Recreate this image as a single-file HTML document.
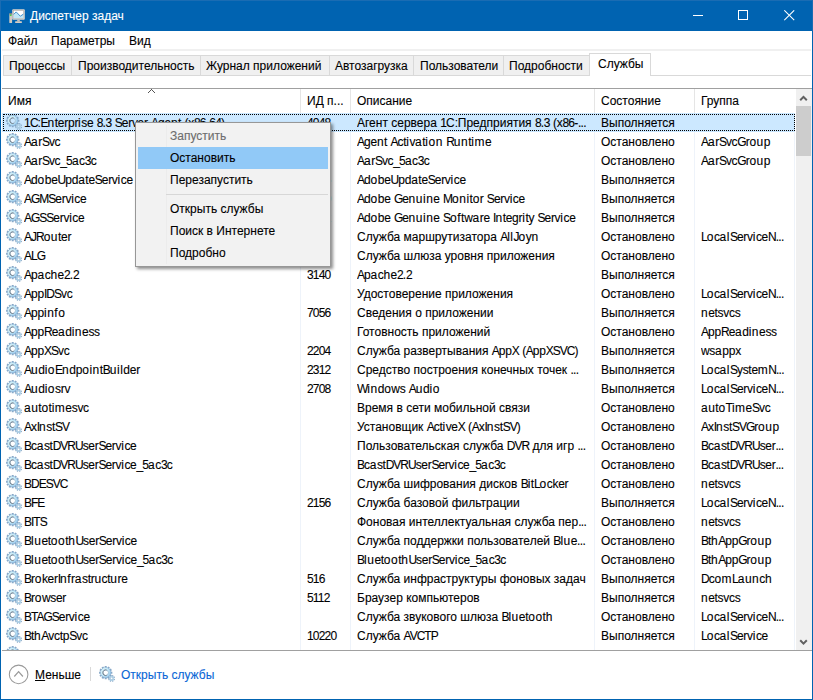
<!DOCTYPE html>
<html><head><meta charset="utf-8">
<style>
*{margin:0;padding:0;box-sizing:border-box}
html,body{width:813px;height:700px;overflow:hidden;background:#fff}
body{font-family:"Liberation Sans",sans-serif;font-size:12px;color:#000;position:relative;-webkit-text-stroke:0.1px currentColor}
.abs{position:absolute}
#frame{position:absolute;left:0;top:0;width:813px;height:700px;border:1px solid #0063b1;border-top:none}
#title{position:absolute;left:0;top:0;width:813px;height:31px;background:#0063b1}
#title .t{position:absolute;left:30px;top:7px;line-height:19px;color:#fff;font-size:12px;white-space:nowrap}
.menu{position:absolute;top:32px;height:18px;line-height:18px;font-size:12px;white-space:nowrap}
#gl1{position:absolute;left:2px;top:49px;width:809px;height:2px;background:#f0f0f0}
.tab{position:absolute;top:55px;height:21px;background:#f0f0f0;border:1px solid #d9d9d9;line-height:19px;white-space:nowrap;font-size:12px}
.tab span{position:absolute;top:1px;margin-left:-1px}
.tab.selt{top:53px;height:23px;background:#fff;border-bottom:none}
#tabline{position:absolute;left:650px;top:75px;width:161px;height:1px;background:#d9d9d9}
#hdrline{position:absolute;left:2px;top:88px;width:810px;height:1px;background:#a0a0a0}
.hsep{position:absolute;top:89px;width:1px;height:24px;background:#e5e5e5}
.h{position:absolute;top:89px;line-height:24px;white-space:nowrap}
.csep{position:absolute;top:113px;width:1px;height:537px;background:#eef3fa}
.row{position:absolute;left:2px;width:793px;height:19px;line-height:19px;white-space:nowrap}
.row.sel{background:#cce8ff}
.row.sel::after{content:"";position:absolute;left:1px;top:1px;right:0;bottom:1px;border:1px dotted #000}
.row .ic{position:absolute;left:2px;top:0}
.c{position:absolute;top:1px;overflow:hidden}
.n{left:22px;width:276px}
.p{left:305px;width:44px}
.d{left:355px;width:238px}
.s{left:599px;width:96px}
.g{left:699px;width:94px}
#list{position:absolute;left:2px;top:113px;width:793px;height:537px;overflow:hidden}
#list .row{left:0}
#sb{position:absolute;left:796px;top:89px;width:16px;height:561px;background:#f0f0f0}
#thumb{position:absolute;left:0px;top:17px;width:15px;height:50px;background:#cdcdcd}
#footline{position:absolute;left:2px;top:650px;width:810px;height:1px;background:#a0a0a0}
#ctx{position:absolute;left:135px;top:122px;width:196px;height:145px;background:#f2f2f2;border:1px solid #979797;box-shadow:2px 2px 3px rgba(0,0,0,0.45)}
#ctx .gut{position:absolute;left:30px;top:2px;width:1px;bottom:2px;background:#ececec}
#ctx .it{position:absolute;left:2px;width:190px;height:22px;line-height:22px;white-space:nowrap}
#ctx .it span{position:absolute;left:32px;top:0}
#ctx .hl{background:#91c9f7}
#ctx .dis{color:#6d6d6d}
#ctx .sep{position:absolute;left:30px;top:71px;width:162px;height:1px;background:#d7d7d7}
.link{color:#0a67d6}
i{font-style:normal}
i.u{letter-spacing:-1px}
i.us{letter-spacing:-1px}
i.w{letter-spacing:-0.3px}
i.b{letter-spacing:-0.2px}
i.o{letter-spacing:0.5px}
i.t{letter-spacing:0.5px}
i.pu{letter-spacing:-0.3px}
i.dg{letter-spacing:-0.8px}
i.dt{letter-spacing:-0.7px}
i.dt1{letter-spacing:-0.3px}
</style></head><body>
<svg width="0" height="0" style="position:absolute">
<defs>
<radialGradient id="gbody" gradientUnits="userSpaceOnUse" cx="7.7" cy="6.8" r="6.5">
<stop offset="0" stop-color="#f0fbff"/><stop offset="0.55" stop-color="#c9ecf8"/><stop offset="1" stop-color="#8cc0ea"/>
</radialGradient>
<symbol id="gear" viewBox="0 0 20 18">
<path d="M13.57 6.56 L15.33 6.75 L15.33 8.65 L13.57 8.84 L13.53 8.99 L13.49 9.15 L14.92 10.20 L13.97 11.84 L12.35 11.12 L12.24 11.24 L12.12 11.35 L12.84 12.97 L11.20 13.92 L10.15 12.49 L9.99 12.53 L9.84 12.57 L9.65 14.33 L7.75 14.33 L7.56 12.57 L7.41 12.53 L7.25 12.49 L6.20 13.92 L4.56 12.97 L5.28 11.35 L5.16 11.24 L5.05 11.12 L3.43 11.84 L2.48 10.20 L3.91 9.15 L3.87 8.99 L3.83 8.84 L2.07 8.65 L2.07 6.75 L3.83 6.56 L3.87 6.41 L3.91 6.25 L2.48 5.20 L3.43 3.56 L5.05 4.28 L5.16 4.16 L5.28 4.05 L4.56 2.43 L6.20 1.48 L7.25 2.91 L7.41 2.87 L7.56 2.83 L7.75 1.07 L9.65 1.07 L9.84 2.83 L9.99 2.87 L10.15 2.91 L11.20 1.48 L12.84 2.43 L12.12 4.05 L12.24 4.16 L12.35 4.28 L13.97 3.56 L14.92 5.20 L13.49 6.25 L13.53 6.41Z M6.25 7.70 a2.45 2.45 0 1 0 4.90 0 a2.45 2.45 0 1 0 -4.90 0Z" fill="#87a8c8" fill-rule="evenodd"/>
<circle cx="8.7" cy="7.7" r="3.85" fill="none" stroke="url(#gbody)" stroke-width="2.5"/>
<circle cx="8.7" cy="7.7" r="2.85" fill="none" stroke="#a9c6dc" stroke-width="0.8"/>
<path d="M9.67 10.38 A2.85 2.85 0 1 1 9.67 5.02" fill="none" stroke="#6b747e" stroke-width="0.85"/>
<path d="M17.08 13.68 L18.00 14.22 L17.58 15.23 L16.56 14.96 L16.37 15.17 L16.16 15.36 L16.43 16.38 L15.42 16.80 L14.88 15.88 L14.60 15.90 L14.32 15.88 L13.78 16.80 L12.77 16.38 L13.04 15.36 L12.83 15.17 L12.64 14.96 L11.62 15.23 L11.20 14.22 L12.12 13.68 L12.10 13.40 L12.12 13.12 L11.20 12.58 L11.62 11.57 L12.64 11.84 L12.83 11.63 L13.04 11.44 L12.77 10.42 L13.78 10.00 L14.32 10.92 L14.60 10.90 L14.88 10.92 L15.42 10.00 L16.43 10.42 L16.16 11.44 L16.37 11.63 L16.56 11.84 L17.58 11.57 L18.00 12.58 L17.08 13.12 L17.10 13.40Z M13.45 13.40 a1.15 1.15 0 1 0 2.30 0 a1.15 1.15 0 1 0 -2.30 0Z" fill="#84a4c4" fill-rule="evenodd"/>
<circle cx="14.6" cy="13.4" r="1.85" fill="none" stroke="#b4d6ea" stroke-width="1.3"/>
</symbol>
</defs>
</svg>
<div id="title">
 <svg class="abs" style="left:9px;top:9px" width="16" height="14" viewBox="0 0 16 14">
  <rect x="0.3" y="4.2" width="2.8" height="9.8" rx="0.6" fill="#d2cac2"/>
  <rect x="0.6" y="4.4" width="2.2" height="1.1" fill="#5a5a5a"/>
  <rect x="0.8" y="5.6" width="1.8" height="1.3" fill="#39d23c"/>
  <rect x="3.2" y="0.2" width="12.6" height="10.6" rx="1" fill="#dad3cc"/>
  <rect x="4.5" y="1.5" width="10" height="7.8" fill="#fff" stroke="#a9a39d" stroke-width="0.5"/>
  <path d="M4.7 5.4 L7.2 2.9 L11.3 7.2 L14.3 5.2 L14.3 9.2 L4.7 9.2Z" fill="#bfe6f7"/>
  <path d="M4.7 5.4 L7.2 2.9 L11.3 7.2 L14.3 5.2" fill="none" stroke="#2f86c8" stroke-width="0.9"/>
  <rect x="8.2" y="10.7" width="2.6" height="1.7" fill="#cbc2b9"/>
  <rect x="6" y="12.3" width="7" height="1.7" rx="0.8" fill="#d6cdc4"/>
 </svg>
 <div class="t">Диспетчер задач</div>
 <svg class="abs" style="left:693px;top:10px" width="10" height="11"><rect x="0" y="5" width="10" height="1" fill="#fff"/></svg>
 <svg class="abs" style="left:738px;top:10px" width="11" height="11"><rect x="0.5" y="0.5" width="9" height="9" fill="none" stroke="#fff" stroke-width="1"/></svg>
 <svg class="abs" style="left:784px;top:10px" width="11" height="11"><path d="M0.3 0.3 L10.2 10.2 M10.2 0.3 L0.3 10.2" stroke="#fff" stroke-width="1.05"/></svg>
</div>
<div class="menu" style="left:8px">Файл</div>
<div class="menu" style="left:51px">Параметры</div>
<div class="menu" style="left:129px">Вид</div>
<div id="gl1"></div>
<div class="tab" style="left:3px;width:69px"><span style="left:6px">Процессы</span></div>
<div class="tab" style="left:71px;width:130px"><span style="left:7px">Производительность</span></div>
<div class="tab" style="left:200px;width:130px"><span style="left:6px">Журнал приложений</span></div>
<div class="tab" style="left:329px;width:85px"><span style="left:6px">Автозагрузка</span></div>
<div class="tab" style="left:413px;width:91px"><span style="left:7px">Пользователи</span></div>
<div class="tab" style="left:503px;width:87px"><span style="left:6px">Подробности</span></div>
<div class="tab selt" style="left:589px;width:62px"><span style="left:9px;top:1px">Службы</span></div>
<div id="tabline"></div>
<div id="hdrline"></div>
<svg class="abs" style="left:148px;top:89px" width="7" height="4" fill="#555" shape-rendering="crispEdges"><rect x="0" y="3" width="1" height="1"/><rect x="1" y="2" width="1" height="1"/><rect x="2" y="1" width="1" height="1"/><rect x="3" y="0" width="1" height="1"/><rect x="4" y="1" width="1" height="1"/><rect x="5" y="2" width="1" height="1"/><rect x="6" y="3" width="1" height="1"/></svg>
<div class="h" style="left:8px">Имя</div>
<div class="hsep" style="left:300px"></div>
<div class="h" style="left:307px">ИД п...</div>
<div class="hsep" style="left:350px"></div>
<div class="h" style="left:357px">Описание</div>
<div class="hsep" style="left:594px"></div>
<div class="h" style="left:601px">Состояние</div>
<div class="hsep" style="left:694px"></div>
<div class="h" style="left:701px">Группа</div>
<div class="csep" style="left:300px"></div>
<div class="csep" style="left:350px"></div>
<div class="csep" style="left:594px"></div>
<div class="csep" style="left:694px"></div>
<div class="csep" style="left:794px"></div>
<div id="list">
<div class="row sel" style="top:0px"><svg class="ic" width="20" height="18" viewBox="0 0 20 18"><use href="#gear"/></svg><span class="c n"><i class="dg">1</i><i class="u">C</i><i class="pu">:</i><i class="u">E</i><i class="o">n</i><i class="w">ter</i><i class="b">p</i><i class="w">r</i><i class="t">i</i><i class="w">se</i> <i class="dg">8</i><i class="dt1">.</i><i class="dg">3</i> <i class="u">S</i><i class="w">erver</i> <i class="u">A</i><i class="b">g</i><i class="w">e</i><i class="o">n</i><i class="w">t</i> <i class="pu">(</i><i class="w">x</i><i class="dg">86</i><i class="pu">-</i><i class="dg">64</i><i class="pu">)</i></span><span class="c p"><i class="dg">4048</i></span><span class="c d">Агент сервера <i class="dg">1</i>С<i class="pu">:</i>Предприятия <i class="dg">8</i><i class="dt1">.</i><i class="dg">3</i> <i class="pu">(</i><i class="w">x</i><i class="dg">86</i><i class="pu">-</i><i class="dt">...</i></span><span class="c s">Выполняется</span><span class="c g"></span></div>
<div class="row" style="top:19px"><svg class="ic" width="20" height="18" viewBox="0 0 20 18"><use href="#gear"/></svg><span class="c n"><i class="u">A</i><i class="o">a</i><i class="w">r</i><i class="u">S</i><i class="w">vc</i></span><span class="c p"></span><span class="c d"><i class="u">A</i><i class="b">g</i><i class="w">e</i><i class="o">n</i><i class="w">t</i> <i class="u">A</i><i class="w">ct</i><i class="t">i</i><i class="w">v</i><i class="o">a</i><i class="w">t</i><i class="t">i</i><i class="o">on</i> <i class="u">R</i><i class="o">un</i><i class="w">t</i><i class="t">i</i><i class="o">m</i><i class="w">e</i></span><span class="c s">Остановлено</span><span class="c g"><i class="u">A</i><i class="o">a</i><i class="w">r</i><i class="u">S</i><i class="w">vc</i><i class="u">G</i><i class="w">r</i><i class="o">ou</i><i class="b">p</i></span></div>
<div class="row" style="top:38px"><svg class="ic" width="20" height="18" viewBox="0 0 20 18"><use href="#gear"/></svg><span class="c n"><i class="u">A</i><i class="o">a</i><i class="w">r</i><i class="u">S</i><i class="w">vc</i><i class="us">_</i><i class="dg">5</i><i class="o">a</i><i class="w">c</i><i class="dg">3</i><i class="w">c</i></span><span class="c p"></span><span class="c d"><i class="u">A</i><i class="o">a</i><i class="w">r</i><i class="u">S</i><i class="w">vc</i><i class="us">_</i><i class="dg">5</i><i class="o">a</i><i class="w">c</i><i class="dg">3</i><i class="w">c</i></span><span class="c s">Остановлено</span><span class="c g"><i class="u">A</i><i class="o">a</i><i class="w">r</i><i class="u">S</i><i class="w">vc</i><i class="u">G</i><i class="w">r</i><i class="o">ou</i><i class="b">p</i></span></div>
<div class="row" style="top:57px"><svg class="ic" width="20" height="18" viewBox="0 0 20 18"><use href="#gear"/></svg><span class="c n"><i class="u">A</i><i class="b">d</i><i class="o">o</i><i class="b">b</i><i class="w">e</i><i class="u">U</i><i class="b">pd</i><i class="o">a</i><i class="w">te</i><i class="u">S</i><i class="w">erv</i><i class="t">i</i><i class="w">ce</i></span><span class="c p"><i class="dg">4536</i></span><span class="c d"><i class="u">A</i><i class="b">d</i><i class="o">o</i><i class="b">b</i><i class="w">e</i><i class="u">U</i><i class="b">pd</i><i class="o">a</i><i class="w">te</i><i class="u">S</i><i class="w">erv</i><i class="t">i</i><i class="w">ce</i></span><span class="c s">Выполняется</span><span class="c g"></span></div>
<div class="row" style="top:76px"><svg class="ic" width="20" height="18" viewBox="0 0 20 18"><use href="#gear"/></svg><span class="c n"><i class="u">AGMS</i><i class="w">erv</i><i class="t">i</i><i class="w">ce</i></span><span class="c p"><i class="dg">4560</i></span><span class="c d"><i class="u">A</i><i class="b">d</i><i class="o">o</i><i class="b">b</i><i class="w">e</i> <i class="u">G</i><i class="w">e</i><i class="o">nu</i><i class="t">i</i><i class="o">n</i><i class="w">e</i> <i class="u">M</i><i class="o">on</i><i class="t">i</i><i class="w">t</i><i class="o">o</i><i class="w">r</i> <i class="u">S</i><i class="w">erv</i><i class="t">i</i><i class="w">ce</i></span><span class="c s">Выполняется</span><span class="c g"></span></div>
<div class="row" style="top:95px"><svg class="ic" width="20" height="18" viewBox="0 0 20 18"><use href="#gear"/></svg><span class="c n"><i class="u">AGSS</i><i class="w">erv</i><i class="t">i</i><i class="w">ce</i></span><span class="c p"><i class="dg">4572</i></span><span class="c d"><i class="u">A</i><i class="b">d</i><i class="o">o</i><i class="b">b</i><i class="w">e</i> <i class="u">G</i><i class="w">e</i><i class="o">nu</i><i class="t">i</i><i class="o">n</i><i class="w">e</i> <i class="u">S</i><i class="o">o</i><i class="t">f</i><i class="w">tw</i><i class="o">a</i><i class="w">re</i> <i class="u">I</i><i class="o">n</i><i class="w">te</i><i class="b">g</i><i class="w">r</i><i class="t">i</i><i class="w">ty</i> <i class="u">S</i><i class="w">erv</i><i class="t">i</i><i class="w">ce</i></span><span class="c s">Выполняется</span><span class="c g"></span></div>
<div class="row" style="top:114px"><svg class="ic" width="20" height="18" viewBox="0 0 20 18"><use href="#gear"/></svg><span class="c n"><i class="u">AJR</i><i class="o">ou</i><i class="w">ter</i></span><span class="c p"></span><span class="c d">Служба маршрутизатора <i class="u">A</i><i class="t">ll</i><i class="u">J</i><i class="o">o</i><i class="w">y</i><i class="o">n</i></span><span class="c s">Остановлено</span><span class="c g"><i class="u">L</i><i class="o">o</i><i class="w">c</i><i class="o">a</i><i class="t">l</i><i class="u">S</i><i class="w">erv</i><i class="t">i</i><i class="w">ce</i><i class="u">N</i><i class="dt">...</i></span></div>
<div class="row" style="top:133px"><svg class="ic" width="20" height="18" viewBox="0 0 20 18"><use href="#gear"/></svg><span class="c n"><i class="u">ALG</i></span><span class="c p"></span><span class="c d">Служба шлюза уровня приложения</span><span class="c s">Остановлено</span><span class="c g"></span></div>
<div class="row" style="top:152px"><svg class="ic" width="20" height="18" viewBox="0 0 20 18"><use href="#gear"/></svg><span class="c n"><i class="u">A</i><i class="b">p</i><i class="o">a</i><i class="w">c</i><i class="o">h</i><i class="w">e</i><i class="dg">2</i><i class="dt1">.</i><i class="dg">2</i></span><span class="c p"><i class="dg">3140</i></span><span class="c d"><i class="u">A</i><i class="b">p</i><i class="o">a</i><i class="w">c</i><i class="o">h</i><i class="w">e</i><i class="dg">2</i><i class="dt1">.</i><i class="dg">2</i></span><span class="c s">Выполняется</span><span class="c g"></span></div>
<div class="row" style="top:171px"><svg class="ic" width="20" height="18" viewBox="0 0 20 18"><use href="#gear"/></svg><span class="c n"><i class="u">A</i><i class="b">pp</i><i class="u">IDS</i><i class="w">vc</i></span><span class="c p"></span><span class="c d">Удостоверение приложения</span><span class="c s">Остановлено</span><span class="c g"><i class="u">L</i><i class="o">o</i><i class="w">c</i><i class="o">a</i><i class="t">l</i><i class="u">S</i><i class="w">erv</i><i class="t">i</i><i class="w">ce</i><i class="u">N</i><i class="dt">...</i></span></div>
<div class="row" style="top:190px"><svg class="ic" width="20" height="18" viewBox="0 0 20 18"><use href="#gear"/></svg><span class="c n"><i class="u">A</i><i class="b">pp</i><i class="t">i</i><i class="o">n</i><i class="t">f</i><i class="o">o</i></span><span class="c p"><i class="dg">7056</i></span><span class="c d">Сведения о приложении</span><span class="c s">Выполняется</span><span class="c g"><i class="o">n</i><i class="w">etsvcs</i></span></div>
<div class="row" style="top:209px"><svg class="ic" width="20" height="18" viewBox="0 0 20 18"><use href="#gear"/></svg><span class="c n"><i class="u">A</i><i class="b">pp</i><i class="u">R</i><i class="w">e</i><i class="o">a</i><i class="b">d</i><i class="t">i</i><i class="o">n</i><i class="w">ess</i></span><span class="c p"></span><span class="c d">Готовность приложений</span><span class="c s">Остановлено</span><span class="c g"><i class="u">A</i><i class="b">pp</i><i class="u">R</i><i class="w">e</i><i class="o">a</i><i class="b">d</i><i class="t">i</i><i class="o">n</i><i class="w">ess</i></span></div>
<div class="row" style="top:228px"><svg class="ic" width="20" height="18" viewBox="0 0 20 18"><use href="#gear"/></svg><span class="c n"><i class="u">A</i><i class="b">pp</i><i class="u">XS</i><i class="w">vc</i></span><span class="c p"><i class="dg">2204</i></span><span class="c d">Служба развертывания <i class="u">A</i><i class="b">pp</i><i class="u">X</i> <i class="pu">(</i><i class="u">A</i><i class="b">pp</i><i class="u">XSVC</i><i class="pu">)</i></span><span class="c s">Выполняется</span><span class="c g"><i class="w">ws</i><i class="o">a</i><i class="b">pp</i><i class="w">x</i></span></div>
<div class="row" style="top:247px"><svg class="ic" width="20" height="18" viewBox="0 0 20 18"><use href="#gear"/></svg><span class="c n"><i class="u">A</i><i class="o">u</i><i class="b">d</i><i class="t">i</i><i class="o">o</i><i class="u">E</i><i class="o">n</i><i class="b">dp</i><i class="o">o</i><i class="t">i</i><i class="o">n</i><i class="w">t</i><i class="u">B</i><i class="o">u</i><i class="t">il</i><i class="b">d</i><i class="w">er</i></span><span class="c p"><i class="dg">2312</i></span><span class="c d">Средство построения конечных точек <i class="dt">...</i></span><span class="c s">Выполняется</span><span class="c g"><i class="u">L</i><i class="o">o</i><i class="w">c</i><i class="o">a</i><i class="t">l</i><i class="u">S</i><i class="w">yste</i><i class="o">m</i><i class="u">N</i><i class="dt">...</i></span></div>
<div class="row" style="top:266px"><svg class="ic" width="20" height="18" viewBox="0 0 20 18"><use href="#gear"/></svg><span class="c n"><i class="u">A</i><i class="o">u</i><i class="b">d</i><i class="t">i</i><i class="o">o</i><i class="w">srv</i></span><span class="c p"><i class="dg">2708</i></span><span class="c d"><i class="u">W</i><i class="t">i</i><i class="o">n</i><i class="b">d</i><i class="o">o</i><i class="w">ws</i> <i class="u">A</i><i class="o">u</i><i class="b">d</i><i class="t">i</i><i class="o">o</i></span><span class="c s">Выполняется</span><span class="c g"><i class="u">L</i><i class="o">o</i><i class="w">c</i><i class="o">a</i><i class="t">l</i><i class="u">S</i><i class="w">erv</i><i class="t">i</i><i class="w">ce</i><i class="u">N</i><i class="dt">...</i></span></div>
<div class="row" style="top:285px"><svg class="ic" width="20" height="18" viewBox="0 0 20 18"><use href="#gear"/></svg><span class="c n"><i class="o">au</i><i class="w">t</i><i class="o">o</i><i class="w">t</i><i class="t">i</i><i class="o">m</i><i class="w">esvc</i></span><span class="c p"></span><span class="c d">Время в сети мобильной связи</span><span class="c s">Остановлено</span><span class="c g"><i class="o">au</i><i class="w">t</i><i class="o">o</i><i class="u">T</i><i class="t">i</i><i class="o">m</i><i class="w">e</i><i class="u">S</i><i class="w">vc</i></span></div>
<div class="row" style="top:304px"><svg class="ic" width="20" height="18" viewBox="0 0 20 18"><use href="#gear"/></svg><span class="c n"><i class="u">A</i><i class="w">x</i><i class="u">I</i><i class="o">n</i><i class="w">st</i><i class="u">SV</i></span><span class="c p"></span><span class="c d">Установщик <i class="u">A</i><i class="w">ct</i><i class="t">i</i><i class="w">ve</i><i class="u">X</i> <i class="pu">(</i><i class="u">A</i><i class="w">x</i><i class="u">I</i><i class="o">n</i><i class="w">st</i><i class="u">SV</i><i class="pu">)</i></span><span class="c s">Остановлено</span><span class="c g"><i class="u">A</i><i class="w">x</i><i class="u">I</i><i class="o">n</i><i class="w">st</i><i class="u">SVG</i><i class="w">r</i><i class="o">ou</i><i class="b">p</i></span></div>
<div class="row" style="top:323px"><svg class="ic" width="20" height="18" viewBox="0 0 20 18"><use href="#gear"/></svg><span class="c n"><i class="u">B</i><i class="w">c</i><i class="o">a</i><i class="w">st</i><i class="u">DVRU</i><i class="w">ser</i><i class="u">S</i><i class="w">erv</i><i class="t">i</i><i class="w">ce</i></span><span class="c p"></span><span class="c d">Пользовательская служба <i class="u">DVR</i> для игр <i class="dt">...</i></span><span class="c s">Остановлено</span><span class="c g"><i class="u">B</i><i class="w">c</i><i class="o">a</i><i class="w">st</i><i class="u">DVRU</i><i class="w">ser</i><i class="dt">...</i></span></div>
<div class="row" style="top:342px"><svg class="ic" width="20" height="18" viewBox="0 0 20 18"><use href="#gear"/></svg><span class="c n"><i class="u">B</i><i class="w">c</i><i class="o">a</i><i class="w">st</i><i class="u">DVRU</i><i class="w">ser</i><i class="u">S</i><i class="w">erv</i><i class="t">i</i><i class="w">ce</i><i class="us">_</i><i class="dg">5</i><i class="o">a</i><i class="w">c</i><i class="dg">3</i><i class="w">c</i></span><span class="c p"></span><span class="c d"><i class="u">B</i><i class="w">c</i><i class="o">a</i><i class="w">st</i><i class="u">DVRU</i><i class="w">ser</i><i class="u">S</i><i class="w">erv</i><i class="t">i</i><i class="w">ce</i><i class="us">_</i><i class="dg">5</i><i class="o">a</i><i class="w">c</i><i class="dg">3</i><i class="w">c</i></span><span class="c s">Остановлено</span><span class="c g"><i class="u">B</i><i class="w">c</i><i class="o">a</i><i class="w">st</i><i class="u">DVRU</i><i class="w">ser</i><i class="dt">...</i></span></div>
<div class="row" style="top:361px"><svg class="ic" width="20" height="18" viewBox="0 0 20 18"><use href="#gear"/></svg><span class="c n"><i class="u">BDESVC</i></span><span class="c p"></span><span class="c d">Служба шифрования дисков <i class="u">B</i><i class="t">i</i><i class="w">t</i><i class="u">L</i><i class="o">o</i><i class="w">cker</i></span><span class="c s">Остановлено</span><span class="c g"><i class="o">n</i><i class="w">etsvcs</i></span></div>
<div class="row" style="top:380px"><svg class="ic" width="20" height="18" viewBox="0 0 20 18"><use href="#gear"/></svg><span class="c n"><i class="u">BFE</i></span><span class="c p"><i class="dg">2156</i></span><span class="c d">Служба базовой фильтрации</span><span class="c s">Выполняется</span><span class="c g"><i class="u">L</i><i class="o">o</i><i class="w">c</i><i class="o">a</i><i class="t">l</i><i class="u">S</i><i class="w">erv</i><i class="t">i</i><i class="w">ce</i><i class="u">N</i><i class="dt">...</i></span></div>
<div class="row" style="top:399px"><svg class="ic" width="20" height="18" viewBox="0 0 20 18"><use href="#gear"/></svg><span class="c n"><i class="u">BITS</i></span><span class="c p"></span><span class="c d">Фоновая интеллектуальная служба пер<i class="dt">...</i></span><span class="c s">Остановлено</span><span class="c g"><i class="o">n</i><i class="w">etsvcs</i></span></div>
<div class="row" style="top:418px"><svg class="ic" width="20" height="18" viewBox="0 0 20 18"><use href="#gear"/></svg><span class="c n"><i class="u">B</i><i class="t">l</i><i class="o">u</i><i class="w">et</i><i class="o">oo</i><i class="w">t</i><i class="o">h</i><i class="u">U</i><i class="w">ser</i><i class="u">S</i><i class="w">erv</i><i class="t">i</i><i class="w">ce</i></span><span class="c p"></span><span class="c d">Служба поддержки пользователей <i class="u">B</i><i class="t">l</i><i class="o">u</i><i class="w">e</i><i class="dt">...</i></span><span class="c s">Остановлено</span><span class="c g"><i class="u">B</i><i class="w">t</i><i class="o">h</i><i class="u">A</i><i class="b">pp</i><i class="u">G</i><i class="w">r</i><i class="o">ou</i><i class="b">p</i></span></div>
<div class="row" style="top:437px"><svg class="ic" width="20" height="18" viewBox="0 0 20 18"><use href="#gear"/></svg><span class="c n"><i class="u">B</i><i class="t">l</i><i class="o">u</i><i class="w">et</i><i class="o">oo</i><i class="w">t</i><i class="o">h</i><i class="u">U</i><i class="w">ser</i><i class="u">S</i><i class="w">erv</i><i class="t">i</i><i class="w">ce</i><i class="us">_</i><i class="dg">5</i><i class="o">a</i><i class="w">c</i><i class="dg">3</i><i class="w">c</i></span><span class="c p"></span><span class="c d"><i class="u">B</i><i class="t">l</i><i class="o">u</i><i class="w">et</i><i class="o">oo</i><i class="w">t</i><i class="o">h</i><i class="u">U</i><i class="w">ser</i><i class="u">S</i><i class="w">erv</i><i class="t">i</i><i class="w">ce</i><i class="us">_</i><i class="dg">5</i><i class="o">a</i><i class="w">c</i><i class="dg">3</i><i class="w">c</i></span><span class="c s">Остановлено</span><span class="c g"><i class="u">B</i><i class="w">t</i><i class="o">h</i><i class="u">A</i><i class="b">pp</i><i class="u">G</i><i class="w">r</i><i class="o">ou</i><i class="b">p</i></span></div>
<div class="row" style="top:456px"><svg class="ic" width="20" height="18" viewBox="0 0 20 18"><use href="#gear"/></svg><span class="c n"><i class="u">B</i><i class="w">r</i><i class="o">o</i><i class="w">ker</i><i class="u">I</i><i class="o">n</i><i class="t">f</i><i class="w">r</i><i class="o">a</i><i class="w">str</i><i class="o">u</i><i class="w">ct</i><i class="o">u</i><i class="w">re</i></span><span class="c p"><i class="dg">516</i></span><span class="c d">Служба инфраструктуры фоновых задач</span><span class="c s">Выполняется</span><span class="c g"><i class="u">D</i><i class="w">c</i><i class="o">om</i><i class="u">L</i><i class="o">aun</i><i class="w">c</i><i class="o">h</i></span></div>
<div class="row" style="top:475px"><svg class="ic" width="20" height="18" viewBox="0 0 20 18"><use href="#gear"/></svg><span class="c n"><i class="u">B</i><i class="w">r</i><i class="o">o</i><i class="w">wser</i></span><span class="c p"><i class="dg">5112</i></span><span class="c d">Браузер компьютеров</span><span class="c s">Выполняется</span><span class="c g"><i class="o">n</i><i class="w">etsvcs</i></span></div>
<div class="row" style="top:494px"><svg class="ic" width="20" height="18" viewBox="0 0 20 18"><use href="#gear"/></svg><span class="c n"><i class="u">BTAGS</i><i class="w">erv</i><i class="t">i</i><i class="w">ce</i></span><span class="c p"></span><span class="c d">Служба звукового шлюза <i class="u">B</i><i class="t">l</i><i class="o">u</i><i class="w">et</i><i class="o">oo</i><i class="w">t</i><i class="o">h</i></span><span class="c s">Остановлено</span><span class="c g"><i class="u">L</i><i class="o">o</i><i class="w">c</i><i class="o">a</i><i class="t">l</i><i class="u">S</i><i class="w">erv</i><i class="t">i</i><i class="w">ce</i><i class="u">N</i><i class="dt">...</i></span></div>
<div class="row" style="top:513px"><svg class="ic" width="20" height="18" viewBox="0 0 20 18"><use href="#gear"/></svg><span class="c n"><i class="u">B</i><i class="w">t</i><i class="o">h</i><i class="u">A</i><i class="w">vct</i><i class="b">p</i><i class="u">S</i><i class="w">vc</i></span><span class="c p"><i class="dg">10220</i></span><span class="c d">Служба <i class="u">AVCTP</i></span><span class="c s">Выполняется</span><span class="c g"><i class="u">L</i><i class="o">o</i><i class="w">c</i><i class="o">a</i><i class="t">l</i><i class="u">S</i><i class="w">erv</i><i class="t">i</i><i class="w">ce</i></span></div>
<div class="row" style="top:532px"><svg class="ic" width="20" height="18" viewBox="0 0 20 18"><use href="#gear"/></svg><span class="c n"></span><span class="c p"></span><span class="c d"></span><span class="c s"></span><span class="c g"></span></div>
</div>
<div id="sb"><div id="thumb"></div>
 <svg class="abs" style="left:3px;top:5px" width="10" height="9"><path d="M1.2 6.2 L4.5 2.9 L7.8 6.2" fill="none" stroke="#606060" stroke-width="2"/></svg>
 <svg class="abs" style="left:3px;top:549px" width="10" height="9"><path d="M1.2 2.3 L4.5 5.6 L7.8 2.3" fill="none" stroke="#606060" stroke-width="2"/></svg>
</div>
<div id="footline"></div>
<svg class="abs" style="left:8px;top:664px" width="22" height="22"><circle cx="10.6" cy="10.4" r="9.3" fill="none" stroke="#999" stroke-width="1.05"/><path d="M6.3 12.5 L10.6 7.6 L14.9 12.5" fill="none" stroke="#9a9a9a" stroke-width="1.2"/></svg>
<div class="abs" style="left:35px;top:666px;line-height:19px;white-space:nowrap"><span style="text-decoration:underline">М</span>еньше</div>
<div class="abs" style="left:90px;top:667px;width:1px;height:14px;background:#d9d9d9"></div>
<svg class="abs" style="left:97px;top:665px" width="20" height="18"><use href="#gear"/></svg>
<div class="abs link" style="left:121px;top:666px;line-height:19px;white-space:nowrap">Открыть службы</div>
<div id="ctx">
 <div class="gut"></div>
 <div class="it dis" style="top:2px"><span>Запустить</span></div>
 <div class="it hl" style="top:24px"><span>Остановить</span></div>
 <div class="it" style="top:46px"><span>Перезапустить</span></div>
 <div class="sep"></div>
 <div class="it" style="top:75px"><span>Открыть службы</span></div>
 <div class="it" style="top:97px"><span>Поиск в Интернете</span></div>
 <div class="it" style="top:119px"><span>Подробно</span></div>
</div>
<div id="frame"></div>
<div class="abs" style="left:0;top:0;width:813px;height:1px;background:#1a6cb3"></div>
<div class="abs" style="left:0;top:0;width:1px;height:31px;background:#1a6cb3"></div>
<div class="abs" style="left:812px;top:0;width:1px;height:31px;background:#1a6cb3"></div>
</body></html>
